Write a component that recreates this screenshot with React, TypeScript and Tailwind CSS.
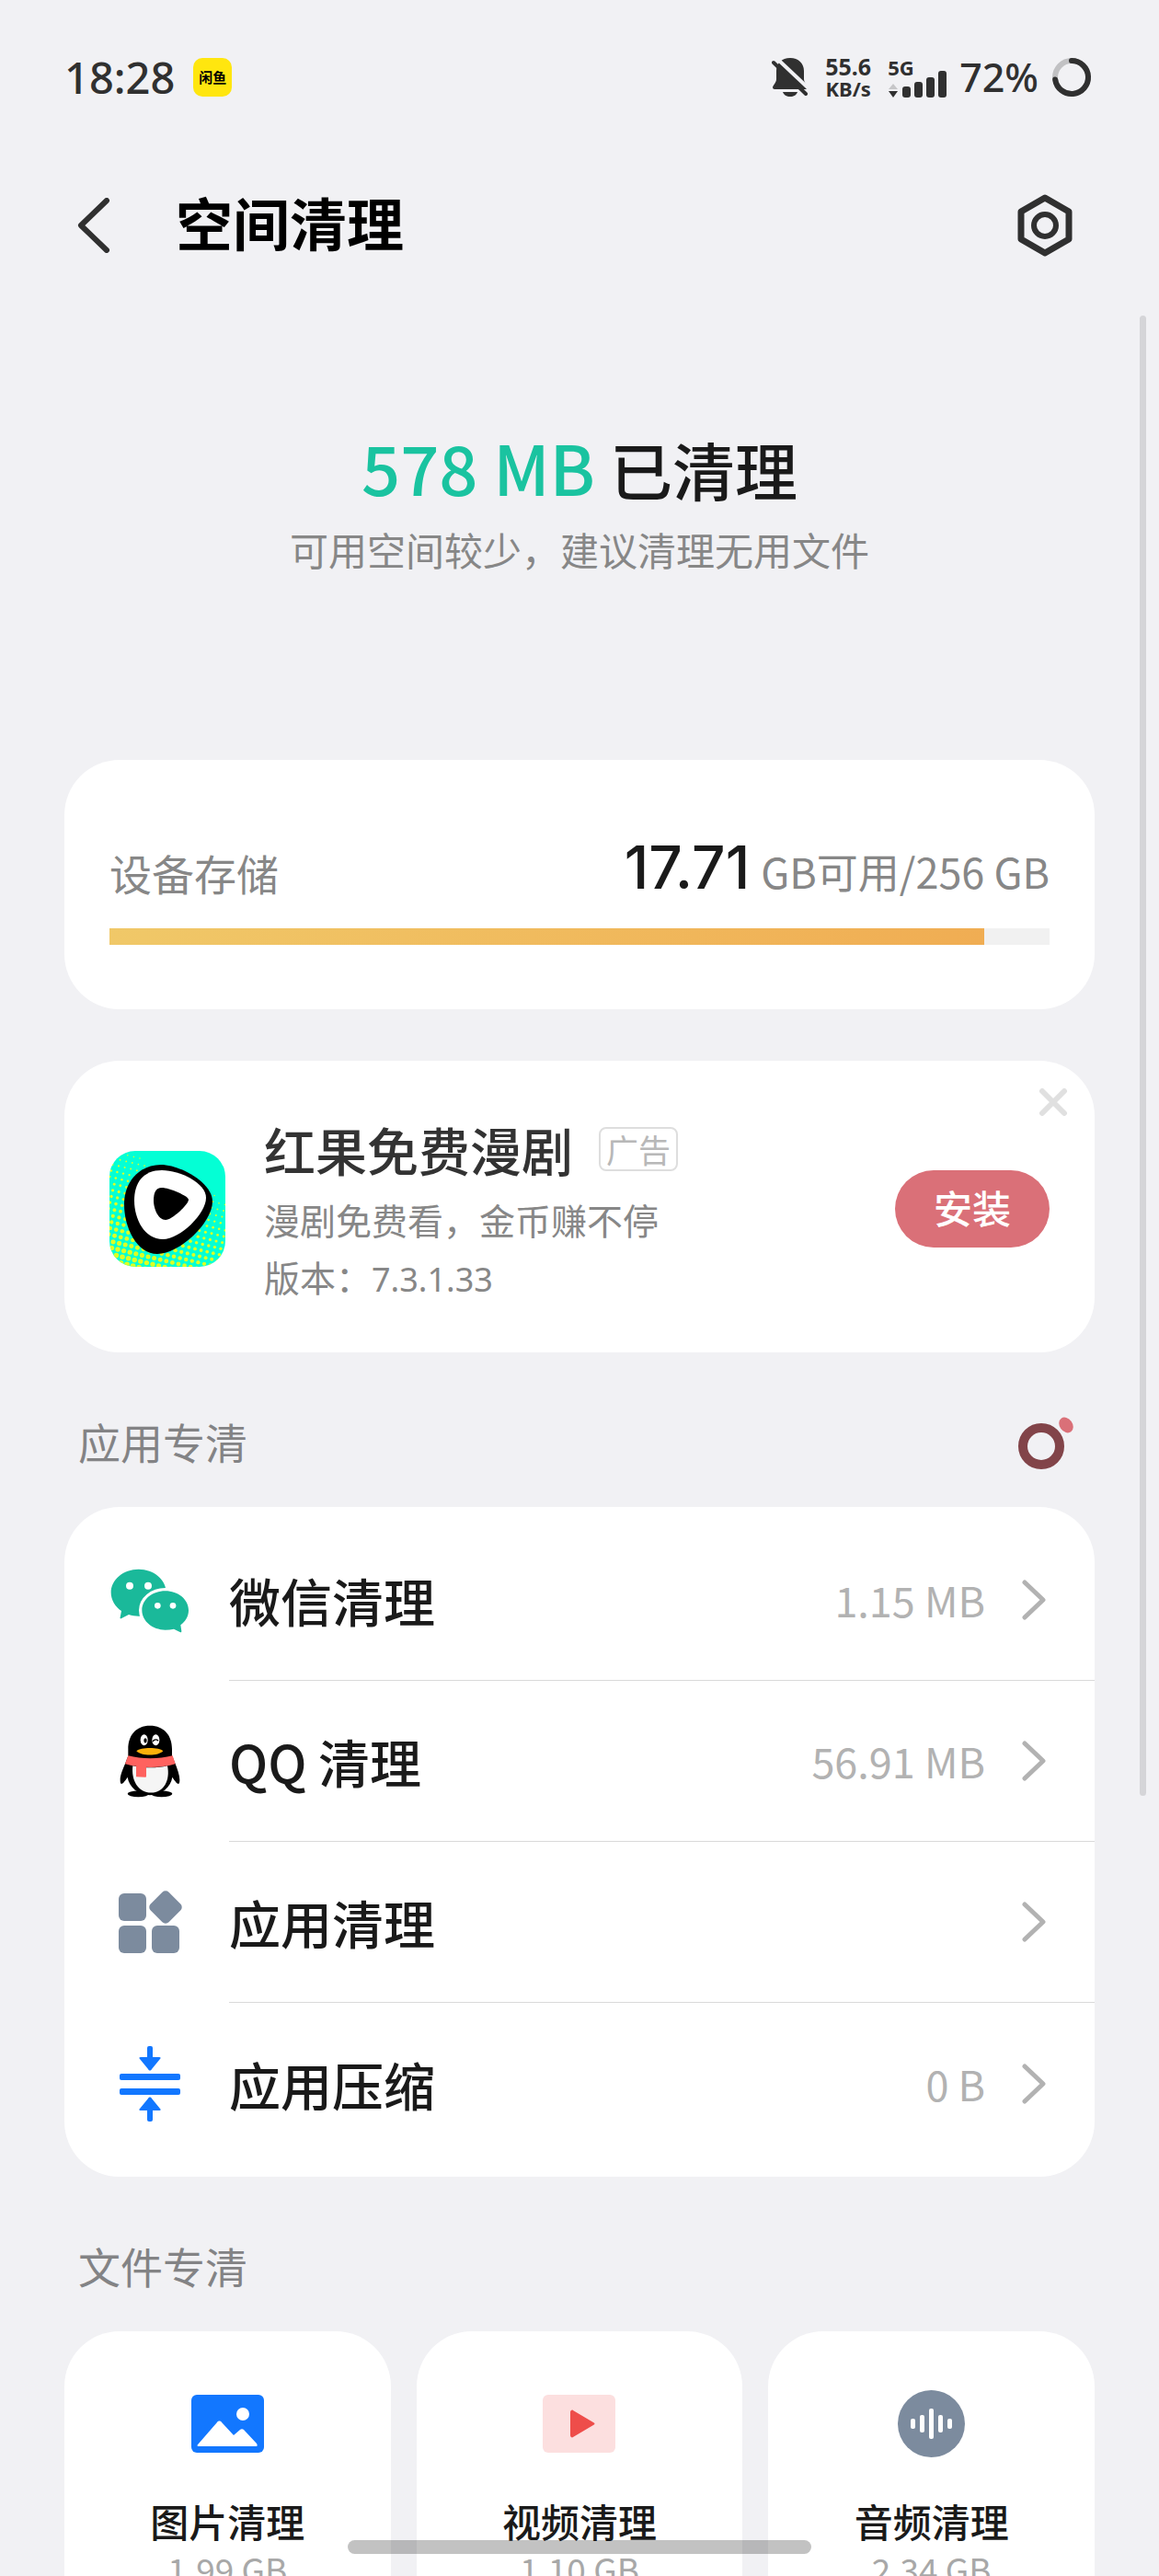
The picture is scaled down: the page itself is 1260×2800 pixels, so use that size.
import type { ReactNode } from 'react';

const appItems = [
  { id: 'wechat', label: '微信清理', size: '1.15 MB', icon: <WechatIcon /> },
  { id: 'qq', label: 'QQ 清理', size: '56.91 MB', icon: <QQIcon /> },
  { id: 'apps', label: '应用清理', size: '', icon: <AppsIcon /> },
  { id: 'compress', label: '应用压缩', size: '0 B', icon: <CompressIcon /> },
];

const fileItems = [
  { id: 'image', label: '图片清理', size: '1.99 GB', icon: <ImageIcon /> },
  { id: 'video', label: '视频清理', size: '1.10 GB', icon: <VideoIcon /> },
  { id: 'audio', label: '音频清理', size: '2.34 GB', icon: <AudioIcon /> },
];

const storage = { free: 17.71, total: 256 };

function WechatIcon() {
  return (
    <svg viewBox="180 250 258 210" className="h-[70px] w-[86px]" aria-hidden="true">
      <g fill="#1ab99a">
        <path d="M272 252c50 0 90 34 90 76s-40 77-90 77c-11 0-22-2-32-5l-25 13c-3 1-4-1-3-4l4-21c-21-14-34-36-34-60 0-42 40-76 90-76Z" />
        <path
          d="M359 323c42 0 76 28 76 63 0 20-10 36-26 48l3 20c0 4-2 5-5 3l-20-10c-9 2-18 3-28 3-42 0-76-29-76-64s34-63 76-63Z"
          stroke="#fff"
          strokeWidth="20"
          paintOrder="stroke"
        />
      </g>
      <g fill="#fff">
        <circle cx="243" cy="306" r="12" />
        <circle cx="303" cy="306" r="12" />
        <circle cx="334" cy="371" r="10" />
        <circle cx="384" cy="371" r="10" />
      </g>
    </svg>
  );
}

function QQIcon() {
  return (
    <svg viewBox="207 764 204 236" className="h-[79px] w-[68px]" aria-hidden="true">
      <ellipse cx="271" cy="988" rx="35" ry="10" />
      <ellipse cx="347" cy="988" rx="35" ry="10" />
      <path d="M309 766c46 0 72 32 72 76v22l11 26c6 17 14 36 14 52 0 20-7 18-24-8-5 32-34 58-73 58s-68-26-73-58c-17 26-24 28-24 8 0-16 9-36 16-52l10-26v-22c0-44 25-76 71-76Z" />
      <path d="M253 896c36 8 80 8 113 0 10 48-12 88-53 88-42 0-66-40-60-88Z" fill="#f5f5f5" />
      <path d="M238 863c46 12 98 12 145 0l9 27c-52 15-110 15-164 0Z" fill="#ff625f" />
      <path d="M264 896h33v33c0 4-1 5-4 5l-29-2Z" fill="#ff625f" />
      <ellipse cx="290" cy="812" rx="12" ry="18" fill="#fff" />
      <ellipse cx="328" cy="812" rx="12" ry="18" fill="#fff" />
      <ellipse cx="294" cy="814" rx="5" ry="8" />
      <path d="M319 816c5-6 12-6 16-2" fill="none" stroke="#000" strokeWidth="4" strokeLinecap="round" />
      <path d="M265 848c14-13 74-13 87 0-14 17-73 17-87 0Z" fill="#fbb00a" />
    </svg>
  );
}

function AppsIcon() {
  return (
    <svg viewBox="0 0 69 69" className="h-[69px] w-[69px]" fill="#7c8b9e" aria-hidden="true">
      <rect x="0" y="3" width="30" height="30" rx="6" />
      <rect x="0" y="38" width="30" height="30" rx="6" />
      <rect x="36" y="38" width="30" height="30" rx="6" />
      <rect x="37" y="4" width="28" height="28" rx="5" transform="rotate(45 51 18)" />
    </svg>
  );
}

function CompressIcon() {
  return (
    <svg viewBox="0 0 66 82" className="h-[82px] w-[66px]" fill="#1277ff" aria-hidden="true">
      <rect x="30" y="0" width="6" height="16" rx="2" />
      <path d="M23 12h20c2 0 2 1 1 2L35 25c-1 2-3 2-4 0L22 14c-1-1-1-2 1-2Z" />
      <rect x="0" y="30" width="66" height="7" rx="2" />
      <rect x="0" y="46" width="66" height="7" rx="2" />
      <path d="M23 70h20c2 0 2-1 1-2l-9-11c-1-2-3-2-4 0l-9 11c-1 1-1 2 1 2Z" />
      <rect x="30" y="66" width="6" height="16" rx="2" />
    </svg>
  );
}

function ImageIcon() {
  return (
    <svg viewBox="0 0 79 63" className="h-[63px] w-[79px]" aria-hidden="true">
      <rect width="79" height="63" rx="6" fill="#1277ff" />
      <circle cx="56" cy="21" r="7" fill="#fff" />
      <path
        d="M8 53 28 30c1-2 4-2 5 0l13 14 7-6c1-1 3-1 4 0l14 15c1 2 1 3-1 3H8c-2 0-2-1 0-3Z"
        fill="#fff"
      />
    </svg>
  );
}

function VideoIcon() {
  return (
    <svg viewBox="0 0 79 63" className="h-[63px] w-[79px]" aria-hidden="true">
      <rect width="79" height="63" rx="6" fill="#fcdfdf" />
      <path d="M30 19c0-2 2-3 3-2l22 13c2 1 2 2 0 3L33 46c-1 1-3 0-3-2Z" fill="#ee4d4a" />
    </svg>
  );
}

function AudioIcon() {
  return (
    <svg viewBox="0 0 73 73" className="h-[73px] w-[73px]" aria-hidden="true">
      <circle cx="36.5" cy="36.5" r="36.5" fill="#7c8b9e" />
      <g fill="#fff">
        <rect x="14" y="31" width="5" height="11" rx="2" />
        <rect x="24" y="27" width="5" height="19" rx="2" />
        <rect x="34" y="20" width="5" height="33" rx="2" />
        <rect x="44" y="27" width="5" height="19" rx="2" />
        <rect x="54" y="31" width="5" height="11" rx="2" />
      </g>
    </svg>
  );
}

function ComicAppIcon() {
  // halftone: dots grow towards the bottom left corner
  const dots = [];
  for (let row = -6; row < 22; row++) {
    for (let col = -2; col < 26; col++) {
      const x = col * 6.6 - row * 1.6;
      const y = row * 6.6 + col * 1.6;
      const weight = (y - x * 0.5 + 10) / 136;
      if (weight > 0) dots.push({ x, y, r: Math.min(3, 0.7 + weight * 2.4) });
    }
  }

  return (
    <svg viewBox="0 0 126 126" className="h-[126px] w-[126px] shrink-0 rounded-[28px]" aria-hidden="true">
      <rect width="126" height="126" fill="#04ffd5" />
      {dots.map((dot) => (
        <circle key={`${dot.x}-${dot.y}`} cx={dot.x} cy={dot.y} r={dot.r} fill="#dcff24" />
      ))}
      <path d="M56 15c20 0 56 19 56 40 0 23-36 57-60 57-22 0-36-28-36-54 0-26 18-43 40-43Z" />
      <path d="M57 21c20 0 48 14 48 30 0 17-28 45-47 45-20 0-31-22-31-42 0-20 10-33 30-33Z" fill="#fff" />
      <path d="M57 40c8 0 29 9 29 13 0 5-18 22-25 22-8 0-13-12-13-21 0-8 2-14 9-14Z" />
    </svg>
  );
}

function Chevron() {
  return (
    <svg viewBox="0 0 26 44" className="h-11 w-[26px]" fill="none" stroke="#b2b2b2" strokeWidth="5" aria-hidden="true">
      <path d="M3 3l20 19L3 41" strokeLinecap="round" strokeLinejoin="round" />
    </svg>
  );
}

function StatusBar() {
  return (
    <div className="flex h-[168px] items-center justify-between pr-[73px] pl-[70px] font-['Noto_Sans','Noto_Sans_CJK_SC',sans-serif] text-[#303030]">
      <div className="flex items-center gap-5">
        <span className="text-[47px] leading-[60px] font-medium">18:28</span>
        <span className="flex h-[42px] w-[42px] items-center justify-center rounded-[10px] bg-[#ffe60f] text-[15px] font-bold text-black">
          闲鱼
        </span>
      </div>
      <div className="flex items-center">
        <svg viewBox="0 0 40 44" className="h-11 w-10" aria-hidden="true">
          <path
            d="M20 1c9 0 15 6 15 14v9c0 4 4 7 4 9 0 1-1 2-2 2H3c-1 0-2-1-2-2 0-2 4-5 4-9v-9C5 7 11 1 20 1Z"
            fill="#303030"
          />
          <path d="M12 38h16c-1 3-4 5-8 5s-7-2-8-5Z" fill="#303030" />
          <path d="M5 1l35 33" stroke="#f1f1f4" strokeWidth="4" />
          <path d="M2 6l35 34" stroke="#303030" strokeWidth="4" strokeLinecap="round" />
        </svg>
        <div className="ml-[18px] flex flex-col items-center font-bold">
          <span className="text-[25px] leading-6">55.6</span>
          <span className="text-[22px] leading-6">KB/s</span>
        </div>
        <div className="ml-[18px] flex flex-col">
          <span className="text-[22px] leading-[22px] font-bold">5G</span>
          <svg viewBox="0 0 64 30" className="-mt-2 h-[30px] w-16" fill="#303030" aria-hidden="true">
            <path d="M1 21l5-6 5 6Z" fill="#c6c6c8" />
            <path d="M1 23l5 7 5-7Z" />
            <rect x="16" y="18" width="9" height="12" rx="3" />
            <rect x="29" y="13" width="9" height="17" rx="3" />
            <rect x="42" y="8" width="9" height="22" rx="3" />
            <rect x="55" y="1" width="9" height="29" rx="3" />
          </svg>
        </div>
        <span className="ml-[14px] text-[43px] leading-[60px] font-medium">72%</span>
        <svg viewBox="0 0 44 44" className="ml-[14px] h-11 w-11" fill="none" strokeWidth="6" aria-hidden="true">
          <circle cx="22" cy="22" r="18" stroke="#c1c1c3" />
          <path d="M22 4a18 18 0 1 1-17.800 20.500" stroke="#303030" strokeLinecap="round" />
        </svg>
      </div>
    </div>
  );
}

function SectionTitle({ children, action }: { children: ReactNode; action?: ReactNode }) {
  return (
    <div className="flex h-[168px] items-center justify-between pt-6 pr-[22px] pl-[15px]">
      <h2 className="text-[46px] leading-[60px] text-[#838385]">{children}</h2>
      {action}
    </div>
  );
}

export default function App() {
  const usedPercent = ((storage.total - storage.free) / storage.total) * 100;

  return (
    <div className="relative h-screen overflow-hidden bg-[#f1f1f4] font-['Noto_Sans_CJK_SC','Noto_Sans',sans-serif] text-[#1a1a1a]">
      <StatusBar />

      <header className="flex h-[154px] items-center pr-[92px] pl-[84px]">
        <button type="button" aria-label="返回">
          <svg viewBox="0 0 36 60" className="h-[60px] w-9" fill="none" stroke="#303030" strokeWidth="6" aria-hidden="true">
            <path d="M32 3L4 30l28 27" strokeLinecap="round" strokeLinejoin="round" />
          </svg>
        </button>
        <h1 className="ml-[71px] flex-1 pb-2 text-[62px] leading-[80px] font-bold text-black">空间清理</h1>
        <button type="button" aria-label="设置">
          <svg viewBox="0 0 64 70" className="h-[70px] w-16" fill="none" stroke="#303030" aria-hidden="true">
            <path d="M32 5L58 20v30L32 65 6 50V20Z" strokeWidth="7" strokeLinejoin="round" />
            <circle cx="32" cy="35" r="12" strokeWidth="6" />
          </svg>
        </button>
      </header>

      <main className="px-[70px]">
        <section className="flex flex-col items-center gap-[10px] pt-[135px] pb-[199px]">
          <p className="flex items-baseline gap-4 font-medium">
            <span className="text-[74px] leading-[100px] text-[#1ac3a0]">578 MB</span>
            <span className="text-[68px] leading-[80px]">已清理</span>
          </p>
          <p className="text-[42px] leading-[60px] text-[#878787]">可用空间较少，建议清理无用文件</p>
        </section>

        <section className="rounded-[60px] bg-white px-[49px] pt-[82px] pb-[70px]">
          <div className="flex items-end justify-between">
            <h2 className="text-[46px] leading-[60px] text-[#878787]">设备存储</h2>
            <p className="flex items-baseline gap-3">
              <span className="font-['Inter','Noto_Sans',sans-serif] text-[64px] leading-[70px] font-medium">
                {storage.free}
              </span>
              <span className="text-[45px] leading-[60px] text-[#878787]">GB可用/{storage.total} GB</span>
            </p>
          </div>
          <div className="mt-[31px] h-[18px] bg-[#f1f1f1]">
            <div className="h-full bg-linear-to-r from-[#f0c868] to-[#f0ad53]" style={{ width: `${usedPercent}%` }} />
          </div>
        </section>

        <section className="relative mt-14 flex items-center rounded-[60px] bg-white px-[49px] pt-14 pb-[52px]">
          <ComicAppIcon />
          <div className="ml-[42px] flex-1">
            <div className="flex items-center gap-7">
              <h2 className="text-[56px] leading-[80px] font-medium text-[#333]">红果免费漫剧</h2>
              <span className="rounded-lg border-2 border-[#dedede] px-[6px] text-[35px] leading-[44px] text-[#b8b8b8]">
                广告
              </span>
            </div>
            <p className="mt-[5px] text-[39px] leading-[62px] text-[#878787]">漫剧免费看，金币赚不停</p>
            <p className="flex items-baseline text-[39px] leading-[62px] text-[#878787]">
              版本：
              <span className="font-['Noto_Sans',sans-serif] text-[36px] leading-[50px]">7.3.1.33</span>
            </p>
          </div>
          <button
            type="button"
            className="rounded-full bg-[#da7078] px-[42px] pb-1 text-[42px] leading-[80px] font-medium text-white"
          >
            安装
          </button>
          <button type="button" aria-label="关闭广告" className="absolute top-[29px] right-[29px]">
            <svg viewBox="0 0 32 32" className="h-8 w-8" stroke="#e0e0e0" strokeWidth="6" aria-hidden="true">
              <path d="M4 4l24 24M28 4L4 28" strokeLinecap="round" />
            </svg>
          </button>
        </section>

        <SectionTitle
          action={
            <svg viewBox="0 0 64 64" className="h-16 w-16" aria-hidden="true">
              <circle cx="28" cy="38" r="20" fill="none" stroke="#824449" strokeWidth="10" />
              <ellipse cx="55" cy="15" rx="7" ry="9" fill="#da7078" transform="rotate(-36 55 15)" />
            </svg>
          }
        >
          应用专清
        </SectionTitle>
        <ul className="rounded-[60px] bg-white py-[14px]">
          {appItems.map((item, index) => (
            <li key={item.id}>
              <button type="button" className="flex h-[175px] w-full items-center text-left">
                <span className="flex w-[179px] justify-center pl-[7px]">{item.icon}</span>
                <span
                  className={`flex h-full flex-1 items-center pr-[53px] ${
                    index < appItems.length - 1 ? 'border-b border-[#d9d9d9]' : ''
                  }`}
                >
                  <span className="flex-1 text-[56px] leading-[80px] font-medium">{item.label}</span>
                  <span className="mr-10 text-[45px] leading-[60px] text-[#b2b2b2]">{item.size}</span>
                  <Chevron />
                </span>
              </button>
            </li>
          ))}
        </ul>

        <SectionTitle>文件专清</SectionTitle>
        <ul className="grid grid-cols-3 gap-7">
          {fileItems.map((item) => (
            <li key={item.id}>
              <button type="button" className="flex w-full flex-col items-center rounded-[60px] bg-white pt-[60px] pb-[60px]">
                <span className="flex h-20 items-center">{item.icon}</span>
                <span className="mt-[38px] text-[42px] leading-[56px] font-medium">{item.label}</span>
                <span className="text-[37px] leading-[48px] text-[#a8a8a8]">{item.size}</span>
              </button>
            </li>
          ))}
        </ul>
      </main>

      <div className="absolute top-[343px] right-[14px] h-[1609px] w-[7px] rounded-full bg-[#d5d5d8]" />
      <div className="absolute bottom-6 left-1/2 h-[15px] w-2/5 -translate-x-1/2 rounded-full bg-black/24" />
    </div>
  );
}
